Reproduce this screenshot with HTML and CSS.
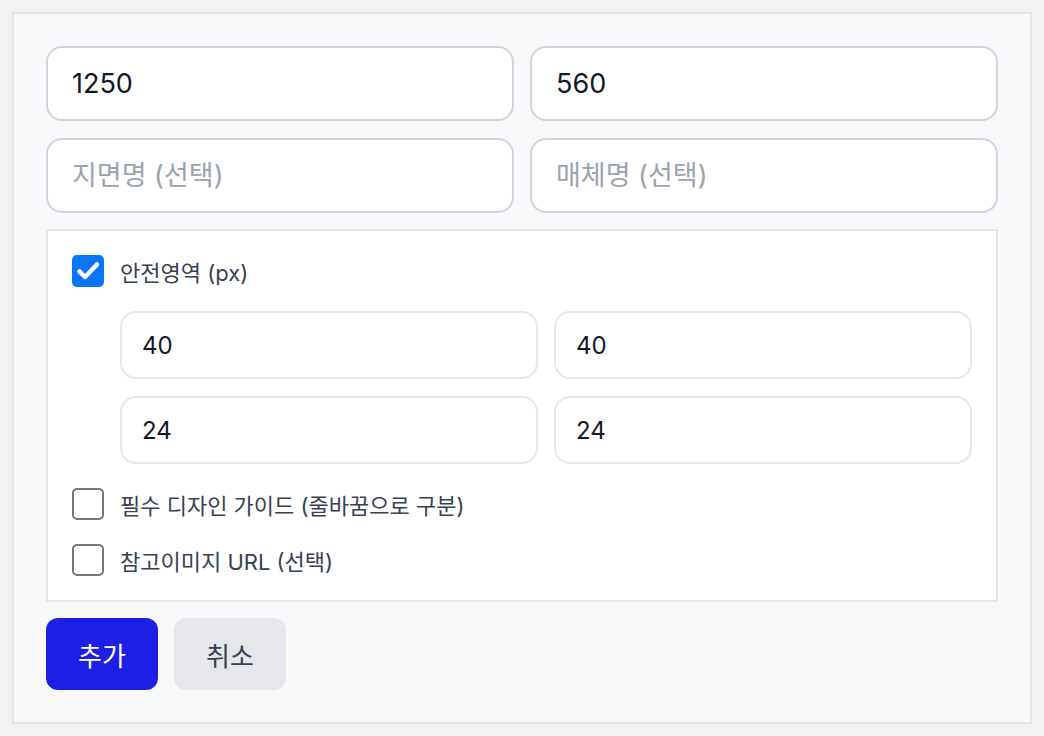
FILE: index.html
```html
<!DOCTYPE html>
<html lang="ko">
<head>
    <meta charset="UTF-8">
    <meta name="viewport" content="width=device-width, initial-scale=1.0">
    <title>지면 추가</title>
    <link rel="stylesheet" href="styles.css">
</head>
<body>
    <div class="panel">
        <div class="field-grid">
            <input type="text" class="field" value="1250">
            <input type="text" class="field" value="560">
            <input type="text" class="field" placeholder="지면명 (선택)">
            <input type="text" class="field" placeholder="매체명 (선택)">
        </div>

        <div class="options">
            <label class="check-row">
                <span class="check checked">
                    <svg viewBox="0 0 32 32" width="32" height="32"><path d="M7.5 16.5l5.5 5.5L25 9.5" fill="none" stroke="#fff" stroke-width="4.5" stroke-linecap="round" stroke-linejoin="round"/></svg>
                </span>
                <span class="check-label">안전영역 (px)</span>
            </label>
            <div class="safe-grid">
                <input type="text" class="sub-field" value="40">
                <input type="text" class="sub-field" value="40">
                <input type="text" class="sub-field" value="24">
                <input type="text" class="sub-field" value="24">
            </div>
            <label class="check-row">
                <span class="check"></span>
                <span class="check-label">필수 디자인 가이드 (줄바꿈으로 구분)</span>
            </label>
            <label class="check-row">
                <span class="check"></span>
                <span class="check-label">참고이미지 URL (선택)</span>
            </label>
        </div>

        <div class="actions">
            <button class="btn btn-primary">추가</button>
            <button class="btn btn-cancel">취소</button>
        </div>
    </div>
</body>
</html>
```

FILE: styles.css
```css
body {
    margin: 0;
    padding: 12px;
    background: #f1f2f4;
    font-family: Inter, "Noto Sans CJK KR", sans-serif;
}

.panel {
    background: #f8f9fb;
    border: 2px solid #e5e7eb;
    padding: 32px;
    display: flex;
    flex-direction: column;
    gap: 16px;
    height: 644px;
}

.field-grid {
    display: grid;
    grid-template-columns: 1fr 1fr;
    gap: 17px 16px;
}

.field {
    box-sizing: border-box;
    height: 75px;
    width: 100%;
    border: 2px solid #d1d5db;
    border-radius: 16px;
    background: #fff;
    padding: 0 24px;
    font-family: inherit;
    font-size: 27px;
    color: #111827;
    outline: none;
}

.field::placeholder {
    color: #9ca3af;
}

.options {
    background: #fff;
    border: 2px solid #e5e7eb;
    padding: 24px;
    display: flex;
    flex-direction: column;
    gap: 24px;
}

.check-row {
    display: flex;
    align-items: center;
    gap: 16px;
    height: 32px;
}

.check {
    box-sizing: border-box;
    width: 32px;
    height: 32px;
    border: 2px solid #767676;
    border-radius: 5px;
    background: #fff;
    flex-shrink: 0;
}

.check.checked {
    border: none;
    background: #0a75f8;
}

.check svg {
    display: block;
}

.check-label {
    font-size: 22px;
    font-weight: 400;
    color: #374151;
}

.safe-grid {
    margin-left: 48px;
    display: grid;
    grid-template-columns: 1fr 1fr;
    gap: 17px 16px;
}

.sub-field {
    box-sizing: border-box;
    height: 68px;
    width: 100%;
    border: 2px solid #e5e7eb;
    border-radius: 16px;
    background: #fff;
    padding: 0 20px;
    font-family: inherit;
    font-size: 24px;
    color: #111827;
    outline: none;
}

.actions {
    display: flex;
    gap: 16px;
}

.btn {
    width: 112px;
    height: 72px;
    border: none;
    border-radius: 12px;
    font-family: inherit;
    font-size: 26px;
    cursor: pointer;
}

.btn-primary {
    background: #1d1fe6;
    color: #fff;
}

.btn-cancel {
    background: #e5e7eb;
    color: #374151;
}
```
